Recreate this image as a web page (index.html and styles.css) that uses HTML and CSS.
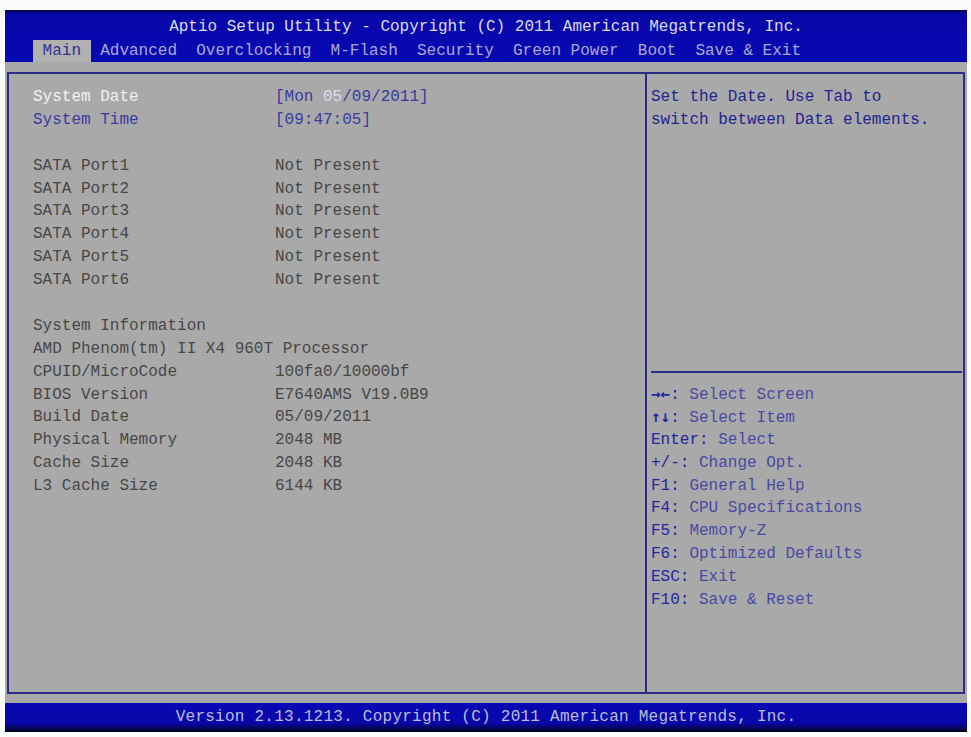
FILE: index.html
```html
<!DOCTYPE html>
<html lang="en">
<head>
<meta charset="utf-8">
<title>Aptio Setup Utility</title>
<link rel="stylesheet" href="styles.css">
</head>
<body>
<div class="screen">
  <header class="top">
    <div class="title">Aptio Setup Utility - Copyright (C) 2011 American Megatrends, Inc.</div>
    <nav class="tabs">
      <span class="tab active">Main</span>
      <span class="tab">Advanced</span>
      <span class="tab">Overclocking</span>
      <span class="tab">M-Flash</span>
      <span class="tab">Security</span>
      <span class="tab">Green Power</span>
      <span class="tab">Boot</span>
      <span class="tab">Save &amp; Exit</span>
    </nav>
  </header>
  <main class="body">
    <div class="frame">
      <section class="left">
        <div class="row"><span class="lbl sel">System Date</span><span class="val blue">[Mon <span class="hl">05</span>/09/2011]</span></div>
        <div class="row"><span class="lbl blue">System Time</span><span class="val blue">[09:47:05]</span></div>
        <div class="row empty"></div>
        <div class="row"><span class="lbl">SATA Port1</span><span class="val">Not Present</span></div>
        <div class="row"><span class="lbl">SATA Port2</span><span class="val">Not Present</span></div>
        <div class="row"><span class="lbl">SATA Port3</span><span class="val">Not Present</span></div>
        <div class="row"><span class="lbl">SATA Port4</span><span class="val">Not Present</span></div>
        <div class="row"><span class="lbl">SATA Port5</span><span class="val">Not Present</span></div>
        <div class="row"><span class="lbl">SATA Port6</span><span class="val">Not Present</span></div>
        <div class="row empty"></div>
        <div class="row full"><span class="lbl">System Information</span></div>
        <div class="row full"><span class="lbl">AMD Phenom(tm) II X4 960T Processor</span></div>
        <div class="row"><span class="lbl">CPUID/MicroCode</span><span class="val">100fa0/10000bf</span></div>
        <div class="row"><span class="lbl">BIOS Version</span><span class="val">E7640AMS V19.0B9</span></div>
        <div class="row"><span class="lbl">Build Date</span><span class="val">05/09/2011</span></div>
        <div class="row"><span class="lbl">Physical Memory</span><span class="val">2048 MB</span></div>
        <div class="row"><span class="lbl">Cache Size</span><span class="val">2048 KB</span></div>
        <div class="row"><span class="lbl">L3 Cache Size</span><span class="val">6144 KB</span></div>
      </section>
      <aside class="right">
        <div class="desc">
          <div class="line">Set the Date. Use Tab to</div>
          <div class="line">switch between Data elements.</div>
        </div>
        <div class="keys">
          <div class="line"><span class="k"><span class="arr">→←</span>:</span> Select Screen</div>
          <div class="line"><span class="k"><span class="arr">↑↓</span>:</span> Select Item</div>
          <div class="line"><span class="k">Enter:</span> Select</div>
          <div class="line"><span class="k">+/-:</span> Change Opt.</div>
          <div class="line"><span class="k">F1:</span> General Help</div>
          <div class="line"><span class="k">F4:</span> CPU Specifications</div>
          <div class="line"><span class="k">F5:</span> Memory-Z</div>
          <div class="line"><span class="k">F6:</span> Optimized Defaults</div>
          <div class="line"><span class="k">ESC:</span> Exit</div>
          <div class="line"><span class="k">F10:</span> Save &amp; Reset</div>
        </div>
      </aside>
    </div>
  </main>
  <footer class="bottom">Version 2.13.1213. Copyright (C) 2011 American Megatrends, Inc.</footer>
</div>
</body>
</html>
```
FILE: styles.css
```css
html, body {
  margin: 0;
  padding: 0;
  background: #fbfbf9;
}

.screen {
  margin: 10px 0 0 5px;
  width: 962px;
  height: 722px;
  display: flex;
  flex-direction: column;
  font-family: "Liberation Mono", "DejaVu Sans Mono", monospace;
  font-size: 16px;
}

.top {
  height: 52px;
  box-sizing: border-box;
  padding-top: 6px;
  background: linear-gradient(to bottom, #05053a 0px, #0707a8 4px, #0808b4 100%);
  display: flex;
  flex-direction: column;
  gap: 2px;
}

.title {
  height: 22px;
  line-height: 22px;
  text-align: center;
  color: #dcdce8;
  white-space: pre;
}

.tabs {
  display: flex;
  padding-left: 28px;
  height: 22px;
  line-height: 22px;
}

.tab {
  padding: 0 9.6px;
  color: #a9a9d4;
  white-space: pre;
}

.tab.active {
  background: #b1b1b1;
  color: #33338f;
}

.body {
  height: 641px;
  background: #a9a9a9;
  box-sizing: border-box;
  padding: 10px 2px 9px 2px;
}

.frame {
  height: 100%;
  box-sizing: border-box;
  border: 2px solid #2c2c88;
  display: grid;
  grid-template-columns: 636px 1fr;
}

.left {
  padding: 12px 0 0 24px;
}

.row {
  display: grid;
  grid-template-columns: 242px auto;
  height: 22.9px;
  line-height: 22.9px;
  white-space: pre;
  color: #474747;
}

.row.full {
  grid-template-columns: auto;
}

.lbl.sel {
  color: #f2f2f2;
}

.blue {
  color: #3a3aa2;
}

.hl {
  color: #dadaea;
}

.right {
  border-left: 2px solid #2c2c88;
  display: flex;
  flex-direction: column;
}

.desc {
  height: 297px;
  box-sizing: border-box;
  padding: 12px 0 0 4px;
  color: #23238f;
}

.line {
  height: 22.9px;
  line-height: 22.9px;
  white-space: pre;
}

.keys {
  margin: 0 1px 0 4px;
  border-top: 2px solid #2c2c88;
  padding-top: 10px;
  color: #4a4aa4;
}

.k {
  color: #2626a0;
}

.arr {
  font-family: "DejaVu Sans Mono", monospace;
  font-weight: bold;
  font-size: 15.9px;
}

.bottom {
  height: 29px;
  line-height: 28px;
  text-align: center;
  color: #bdbdd8;
  letter-spacing: 0.25px;
  white-space: pre;
  background: linear-gradient(to bottom, #0808b4 0%, #0707a8 70%, #04044a 90%, #000010 100%);
}
```
